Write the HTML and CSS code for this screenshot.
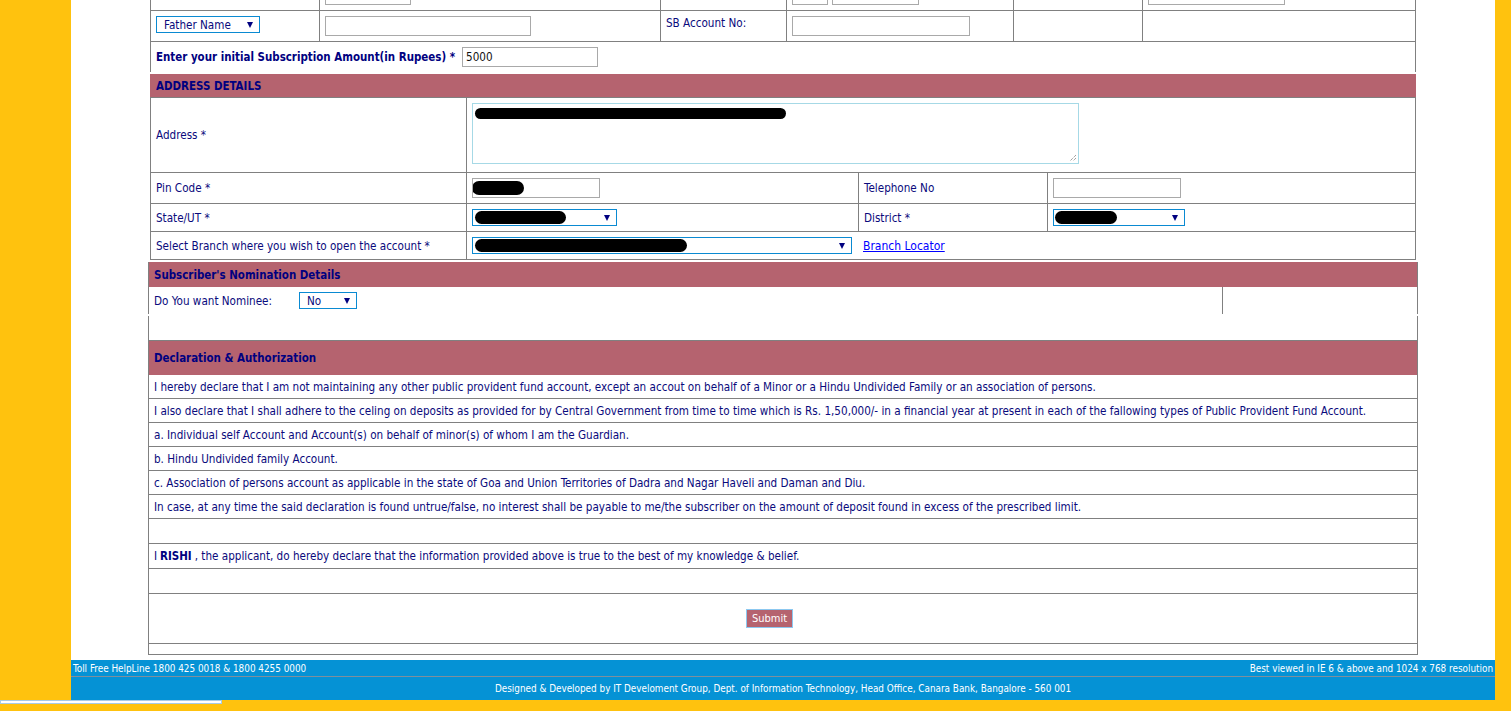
FILE: index.html
```html
<!DOCTYPE html>
<html lang="en">
<head>
<meta charset="utf-8">
<title>PPF Account Opening</title>
<link rel="stylesheet" href="styles.css">
</head>
<body>
<div class="page">
  <div class="form">
    <div class="sec-a">
      <div class="g6 r1">
        <div class="c"></div>
        <div class="c"><span class="inp w86"></span></div>
        <div class="c"></div>
        <div class="c"><span class="inp w36"></span><span class="inp w87"></span></div>
        <div class="c"></div>
        <div class="c"><span class="inp w137"></span></div>
      </div>
      <div class="g6 r2">
        <div class="c"><span class="sel w104"><span class="st">Father Name</span><i class="arr"></i></span></div>
        <div class="c"><span class="inp w206"></span></div>
        <div class="c"><span class="lbl">SB Account No:</span></div>
        <div class="c"><span class="inp w178"></span></div>
        <div class="c"></div>
        <div class="c"></div>
      </div>
      <div class="r3">
        <b>Enter your initial Subscription Amount(in Rupees) *</b>
        <span class="inp w136 val">5000</span>
      </div>
    </div>

    <div class="sec-b">
      <div class="hdr hdr-addr">ADDRESS DETAILS</div>
      <div class="g4">
        <div class="c lab ra">Address *</div>
        <div class="c span3 top">
          <div class="ta"><span class="blob b-ta"></span><svg class="grip" width="9" height="9" viewBox="0 0 9 9"><path d="M8 2 L2 8 M8 5 L5 8" stroke="#777" stroke-width="1" stroke-dasharray="1 1"/></svg></div>
        </div>

        <div class="c lab rp">Pin Code *</div>
        <div class="c rp"><span class="inp w128"><span class="blob b-pin"></span></span></div>
        <div class="c lab rp">Telephone No</div>
        <div class="c rp"><span class="inp w128"></span></div>

        <div class="c lab rs">State/UT *</div>
        <div class="c rs"><span class="sel w145"><span class="blob b-st"></span><i class="arr"></i></span></div>
        <div class="c lab rs">District *</div>
        <div class="c rs"><span class="sel w132"><span class="blob b-dt"></span><i class="arr"></i></span></div>

        <div class="c lab rs last">Select Branch where you wish to open the account *</div>
        <div class="c span3 rs last"><span class="sel w380"><span class="blob b-br"></span><i class="arr"></i></span><a class="link" href="#">Branch Locator</a></div>
      </div>
    </div>

    <div class="sec-n">
      <div class="hdr hdr-nom">Subscriber's Nomination Details</div>
      <div class="nrow">
        <div class="ncell"><span class="nlab">Do You want Nominee:</span><span class="sel w58"><span class="st">No</span><i class="arr"></i></span></div>
        <div class="ncell2"></div>
      </div>
    </div>

    <div class="sec-d">
      <div class="drow blank0"></div>
      <div class="hdr hdr-dec">Declaration &amp; Authorization</div>
      <div class="drow">I hereby declare that I am not maintaining any other public provident fund account, except an accout on behalf of a Minor or a Hindu Undivided Family or an association of persons.</div>
      <div class="drow">I also declare that I shall adhere to the celing on deposits as provided for by Central Government from time to time which is Rs. 1,50,000/- in a financial year at present in each of the fallowing types of Public Provident Fund Account.</div>
      <div class="drow">a. Individual self Account and Account(s) on behalf of minor(s) of whom I am the Guardian.</div>
      <div class="drow">b. Hindu Undivided family Account.</div>
      <div class="drow">c. Association of persons account as applicable in the state of Goa and Union Territories of Dadra and Nagar Haveli and Daman and Diu.</div>
      <div class="drow">In case, at any time the said declaration is found untrue/false, no interest shall be payable to me/the subscriber on the amount of deposit found in excess of the prescribed limit.</div>
      <div class="drow tall"></div>
      <div class="drow tall">I <b>RISHI</b> , the applicant, do hereby declare that the information provided above is true to the best of my knowledge &amp; belief.</div>
      <div class="drow tall"></div>
      <div class="drow sub"><button class="btn" type="button">Submit</button></div>
      <div class="drow end"></div>
    </div>
  </div>

  <div class="footer">
    <div class="f1"><span>Toll Free HelpLine 1800 425 0018 &amp; 1800 4255 0000</span><span>Best viewed in IE 6 &amp; above and 1024 x 768 resolution</span></div>
    <div class="f2">Designed &amp; Developed by IT Develoment Group, Dept. of Information Technology, Head Office, Canara Bank, Bangalore - 560 001</div>
  </div>
</div>
<div class="hscroll"></div>
</body>
</html>
```

FILE: styles.css
```css
html, body {
  margin: 0;
  padding: 0;
}
body {
  background: #ffc20e;
  font-family: "DejaVu Sans Condensed", "DejaVu Sans", sans-serif;
  font-size: 11.6px;
  color: #0a0a7c;
  overflow: hidden;
  height: 711px;
}
b { font-size: 11.45px; }
.page {
  margin-left: 71px;
  width: 1424px;
  background: #fff;
}
.form {
  margin-left: 77px;
  width: 1270px;
  margin-top: -20px;
  padding-bottom: 5px;
}

/* generic boxes */
.inp {
  display: inline-flex;
  align-items: center;
  box-sizing: border-box;
  height: 20px;
  border: 1px solid #a9a9a9;
  background: #fff;
  overflow: hidden;
}
.sel {
  display: inline-flex;
  align-items: center;
  justify-content: space-between;
  box-sizing: border-box;
  height: 17px;
  border: 1px solid #0a8ad2;
  background: #fff;
  padding: 0 6px 0 2px;
  overflow: hidden;
}
.sel .st { padding-left: 5px; }
.arr {
  width: 0;
  height: 0;
  border-left: 3px solid transparent;
  border-right: 3px solid transparent;
  border-top: 6px solid #000080;
}
.blob {
  display: block;
  background: #000;
  border-radius: 7px;
}
.w36 { width: 36px; }
.w58 { width: 58px; }
.w86 { width: 86px; }
.w87 { width: 87px; }
.w104 { width: 104px; }
.w128 { width: 128px; }
.w132 { width: 132px; }
.w136 { width: 136px; }
.w137 { width: 137px; }
.w145 { width: 145px; }
.w178 { width: 178px; }
.w206 { width: 206px; }
.w380 { width: 380px; }
.val { padding-left: 3px; color: #111; }

/* section A */
.sec-a {
  margin: 0 2px;
  border-left: 1px solid #808080;
  border-right: 1px solid #808080;
}
.g6 {
  display: grid;
  grid-template-columns: 169px 341px 126px 227px 129px 272px;
  border-bottom: 1px solid #808080;
}
.g6 .c {
  box-sizing: border-box;
  border-right: 1px solid #808080;
  padding: 5px 0 0 5px;
  display: flex;
  gap: 4px;
  align-items: flex-start;
}
.g6 .c:last-child { border-right: 0; }
.r1 { height: 30px; }
.r2 { height: 30px; }
.r2 .lbl { line-height: 14px; }
.r3 {
  height: 30px;
  display: flex;
  align-items: center;
  gap: 7px;
  padding-left: 5px;
}
.r3 b { color: #000080; }

/* address */
.sec-b { margin: 2px 2px 0; }
.hdr {
  background: #b5636f;
  color: #000080;
  font-weight: bold;
  font-size: 11.45px;
  display: flex;
  align-items: center;
  box-sizing: border-box;
}
.hdr-addr { height: 23px; padding-left: 6px; }
.g4 {
  display: grid;
  grid-template-columns: 316px 392px 189px 368px;
  border-left: 1px solid #808080;
  border-right: 1px solid #808080;
  border-top: 1px solid #808080;
}
.g4 .c {
  box-sizing: border-box;
  border-right: 1px solid #808080;
  border-bottom: 1px solid #808080;
  padding-left: 5px;
  display: flex;
  align-items: center;
}
.g4 .c:nth-child(2), .g4 .c:nth-child(6), .g4 .c:nth-child(10), .g4 .c.span3 { border-right: 0; }
.g4 .span3 { grid-column: span 3; }
.g4 .top { align-items: flex-start; padding-top: 5px; }
.ra { height: 75px; }
.rp { height: 31px; }
.rs { height: 28px; }
.ta {
  position: relative;
  box-sizing: border-box;
  width: 607px;
  height: 61px;
  border: 1px solid #a6d9e6;
  padding: 4px 0 0 2px;
}
.grip { position: absolute; right: 1px; bottom: 1px; }
.b-ta { width: 311px; height: 11px; }
.b-pin { width: 52px; height: 14px; margin-left: -1px; }
.b-st { width: 91px; height: 13px; }
.b-dt { width: 62px; height: 13px; margin-left: -1px; }
.b-br { width: 212px; height: 13px; }
.link {
  margin-left: 11px;
  color: #0000ff;
  text-decoration: underline;
  font-size: 12px;
}

/* nomination */
.sec-n { margin-top: 2px; }
.hdr-nom {
  height: 25px;
  padding-left: 5px;
  border-left: 1px solid #808080;
  border-right: 1px solid #808080;
}
.nrow {
  display: flex;
  height: 27px;
  border-left: 1px solid #808080;
  border-right: 1px solid #808080;
}
.ncell {
  width: 1074px;
  border-right: 1px solid #808080;
  display: flex;
  align-items: center;
  padding-left: 5px;
  box-sizing: border-box;
}
.nlab { width: 145px; }
.ncell2 { flex: 1; }

/* declaration */
.sec-d {
  margin-top: 2px;
  border-left: 1px solid #808080;
  border-right: 1px solid #808080;
  border-bottom: 1px solid #808080;
}
.drow {
  box-sizing: border-box;
  height: 24px;
  border-bottom: 1px solid #808080;
  padding-left: 5px;
  display: flex;
  align-items: center;
  white-space: nowrap;
}
.drow b { color: #000080; margin: 0 3px; }
.blank0 { height: 25px; }
.hdr-dec { height: 34px; padding-left: 5px; }
.drow.tall { height: 25px; }
.drow.sub { height: 50px; justify-content: center; padding: 0 27px 0 0; }
.drow.end { height: 10px; border-bottom: 0; }
.btn {
  box-sizing: border-box;
  width: 47px;
  height: 19px;
  background: #b5636f;
  color: #fff;
  border: 1px solid #8cc8f0;
  font-family: inherit;
  font-size: 11px;
  padding: 0;
}

/* footer */
.footer {
  background: #0592d5;
  color: #fff;
  font-size: 9.85px;
}
.f1 {
  height: 16px;
  border-bottom: 1px solid #7f8f9c;
  display: flex;
  justify-content: space-between;
  align-items: center;
  padding: 0 2px;
}
.f2 {
  height: 23px;
  display: flex;
  align-items: center;
  justify-content: center;
}
.hscroll {
  width: 222px;
  height: 4px;
  box-sizing: border-box;
  background: #fff;
  border: 1px solid #a8cbe6;
}
```
